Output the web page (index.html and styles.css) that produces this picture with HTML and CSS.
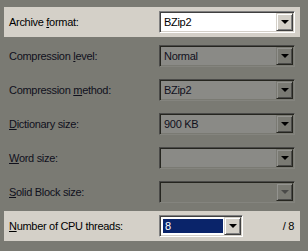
FILE: index.html
```html
<!DOCTYPE html>
<html lang="en">
<head>
  <meta charset="UTF-8">
  <title>Archive settings</title>
  <link rel="stylesheet" href="styles.css">
</head>
<body>
  <div class="panel">
    <div class="row active">
      <span class="label">Archive <u>f</u>ormat:</span>
      <div class="combo">
        <span class="field">BZip2</span>
        <span class="drop"><i class="arrow"></i></span>
      </div>
    </div>
    <div class="row">
      <span class="label">Compression <u>l</u>evel:</span>
      <div class="combo">
        <span class="field">Normal</span>
        <span class="drop"><i class="arrow"></i></span>
      </div>
    </div>
    <div class="row">
      <span class="label">Compression <u>m</u>ethod:</span>
      <div class="combo">
        <span class="field">BZip2</span>
        <span class="drop"><i class="arrow"></i></span>
      </div>
    </div>
    <div class="row">
      <span class="label"><u>D</u>ictionary size:</span>
      <div class="combo">
        <span class="field">900 KB</span>
        <span class="drop"><i class="arrow"></i></span>
      </div>
    </div>
    <div class="row">
      <span class="label"><u>W</u>ord size:</span>
      <div class="combo">
        <span class="field"></span>
        <span class="drop"><i class="arrow"></i></span>
      </div>
    </div>
    <div class="row">
      <span class="label"><u>S</u>olid Block size:</span>
      <div class="combo disabled">
        <span class="field"></span>
        <span class="drop"><i class="arrow"></i></span>
      </div>
    </div>
    <div class="row active">
      <span class="label"><u>N</u>umber of CPU threads:</span>
      <div class="combo short">
        <span class="field"><span class="selected">8</span></span>
        <span class="drop"><i class="arrow"></i></span>
      </div>
      <span class="total">/ 8</span>
    </div>
  </div>
</body>
</html>
```

FILE: styles.css
```css
body {
  margin: 0;
  background-color: #7a7a73;
  font-family: 'Liberation Sans', Arial, sans-serif;
  font-size: 11px;
  letter-spacing: -0.3px;
  color: #10101c;
}

.panel {
  padding: 7px 0 0 4px;
  width: 296px;
  display: flex;
  flex-direction: column;
  gap: 4px;
}

.row {
  height: 30px;
  display: flex;
  align-items: center;
  padding-left: 5px;
}

.row.active {
  background-color: #d4d0c8;
  color: #000;
}

.label {
  width: 150px;
  white-space: nowrap;
}

/* sunken combo box, classic style */
.combo {
  width: 130px;
  height: 16px;
  display: flex;
  border-top: 1px solid #4a4a48;
  border-left: 1px solid #4a4a48;
  border-right: 1px solid #84847e;
  border-bottom: 1px solid #84847e;
  box-shadow: inset 1px 1px 0 #25251f, inset -1px -1px 0 #7a7a73;
  padding: 2px;
  background-color: #8a8a86;
}

.row.active .combo {
  border-top-color: #808080;
  border-left-color: #808080;
  border-right-color: #fff;
  border-bottom-color: #fff;
  box-shadow: inset 1px 1px 0 #404040, inset -1px -1px 0 #d4d0c8;
  background-color: #fff;
}

.combo.short {
  width: 78px;
}

.field {
  flex: 1;
  line-height: 16px;
  padding-left: 2px;
  white-space: nowrap;
  overflow: hidden;
}

.combo.disabled {
  background-color: #7a7a73;
}

.selected {
  display: block;
  margin: 1px 1px 1px -1px;
  height: 14px;
  line-height: 14px;
  padding-left: 2px;
  background-color: #0a246a;
  color: #fff;
}

.drop {
  box-sizing: border-box;
  margin: -1px -1px -1px 0;
  width: 17px;
  height: 18px;
  background-color: #7a7a73;
  border-top: 1px solid #7a7a73;
  border-left: 1px solid #7a7a73;
  border-right: 1px solid #25251f;
  border-bottom: 1px solid #25251f;
  box-shadow: inset 1px 1px 0 #93938f, inset -1px -1px 0 #4a4a48;
  display: flex;
  align-items: center;
  justify-content: center;
}

.row.active .drop {
  background-color: #d4d0c8;
  border-top-color: #d4d0c8;
  border-left-color: #d4d0c8;
  border-right-color: #404040;
  border-bottom-color: #404040;
  box-shadow: inset 1px 1px 0 #fff, inset -1px -1px 0 #808080;
}

.arrow {
  width: 0;
  height: 0;
  border-left: 4px solid transparent;
  border-right: 4px solid transparent;
  border-top: 4px solid #000;
}

.combo.disabled .arrow {
  border-top-color: #4a4a48;
}

.total {
  margin-left: auto;
  padding-right: 6px;
  color: #000;
}
```
